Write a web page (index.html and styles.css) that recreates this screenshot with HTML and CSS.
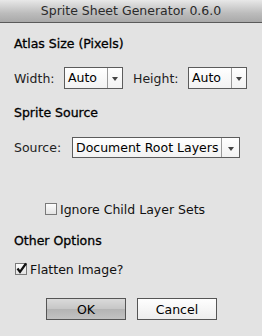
FILE: index.html
```html
<!DOCTYPE html>
<html lang="en">
  <head>
    <meta charset="UTF-8" />
    <title>Sprite Sheet Generator 0.6.0</title>
    <link rel="stylesheet" href="styles.css">
  </head>
  <body>
    <div class="window">
      <div class="titlebar">Sprite Sheet Generator 0.6.0</div>

      <div class="content">
        <div class="heading">Atlas Size (Pixels)</div>
        <div class="row size-row">
          <span class="label label-width">Width:</span>
          <div class="select select-small">
            <span class="value">Auto</span>
            <span class="arrow"></span>
          </div>
          <span class="label label-height">Height:</span>
          <div class="select select-small">
            <span class="value">Auto</span>
            <span class="arrow"></span>
          </div>
        </div>

        <div class="heading heading-source">Sprite Source</div>
        <div class="row source-row">
          <span class="label label-source">Source:</span>
          <div class="select select-wide">
            <span class="value">Document Root Layers</span>
            <span class="arrow"></span>
          </div>
        </div>

        <label class="check check-ignore">
          <span class="box"></span>
          <span>Ignore Child Layer Sets</span>
        </label>

        <div class="heading heading-other">Other Options</div>
        <label class="check check-flatten">
          <span class="box checked">
            <svg width="13" height="13" viewBox="0 0 13 13">
              <path d="M2.5 6.5 L5 9.8 L11 1.5" fill="none" stroke="#111" stroke-width="2.2" />
            </svg>
          </span>
          <span>Flatten Image?</span>
        </label>

        <div class="buttons">
          <button class="btn btn-default">OK</button>
          <button class="btn">Cancel</button>
        </div>
      </div>
    </div>
  </body>
</html>
```

FILE: styles.css
```css
* {
  margin: 0;
  padding: 0;
  box-sizing: border-box;
}

body {
  font-family: "DejaVu Sans", "Liberation Sans", sans-serif;
  font-size: 12.5px;
  color: #111;
  background-color: #e3e3e3;
  width: 262px;
  height: 336px;
  overflow: hidden;
}

.window {
  width: 262px;
  height: 336px;
  background-color: #e3e3e3;
  display: flex;
  flex-direction: column;
}

.titlebar {
  height: 23px;
  line-height: 22px;
  text-align: center;
  font-size: 12.5px;
  color: #2a2a2a;
  background: linear-gradient(#e8e8e8, #bcbcbc 60%, #a9a9a9);
  border-bottom: 1px solid #5a5a5a;
}

.content {
  padding: 13px 0 0 14px;
  display: flex;
  flex-direction: column;
}

.heading {
  height: 16px;
  line-height: 16px;
  color: #000;
  -webkit-text-stroke: 0.3px #000;
}

.row {
  display: flex;
  align-items: center;
}

.label {
  color: #222;
}

.size-row {
  margin-top: 15px;
}

.label-width {
  width: 50px;
}

.label-height {
  width: 55px;
  margin-left: 10px;
}

.label-source {
  width: 58px;
}

.select {
  display: flex;
  height: 22px;
  border: 1px solid #5c5c5c;
  background: linear-gradient(#ffffff, #f2f2f2);
}

.select-small {
  width: 59px;
}

.select-wide {
  width: 168px;
  height: 21px;
}

.select .value {
  flex: 1;
  padding-left: 3px;
  line-height: 20px;
  color: #000;
  white-space: nowrap;
}

.select .arrow {
  width: 15px;
  border-left: 1px solid #9a9a9a;
  position: relative;
}

.select-wide .arrow {
  width: 18px;
}

.select .arrow::after {
  content: "";
  position: absolute;
  left: 50%;
  top: 50%;
  margin-left: -3px;
  margin-top: -1px;
  border-left: 3px solid transparent;
  border-right: 3px solid transparent;
  border-top: 4px solid #444;
}

.heading-source {
  margin-top: 16px;
}

.source-row {
  margin-top: 16px;
}

.check {
  display: flex;
  align-items: center;
  height: 16px;
  color: #111;
}

.check .box {
  width: 12px;
  height: 12px;
  margin-right: 3px;
  border: 1px solid #7a7a7a;
  background: linear-gradient(#fdfdfd, #e4e4e4);
  display: flex;
  align-items: center;
  justify-content: center;
}

.check .box svg {
  overflow: visible;
  flex: none;
  margin-top: -2px;
}

.check-ignore {
  margin-top: 43px;
  padding-left: 31px;
}

.heading-other {
  margin-top: 16px;
}

.check-flatten {
  margin-top: 12px;
  padding-left: 1px;
}

.buttons {
  display: flex;
  gap: 11px;
  margin-top: 21px;
  padding-left: 32px;
}

.btn {
  width: 80px;
  height: 22px;
  font-family: inherit;
  font-size: 12.5px;
  color: #000;
  border: 1px solid #555;
  background: linear-gradient(#fefefe, #ededed);
}

.btn-default {
  background: linear-gradient(#dadada, #c6c6c6 50%, #b4b4b4 51%, #c2c2c2);
}
```
